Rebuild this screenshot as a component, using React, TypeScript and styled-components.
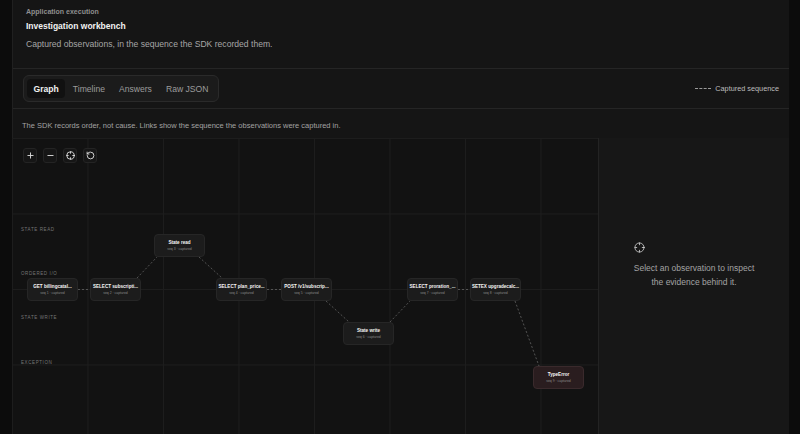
import React, { useState } from 'react';
import styled, { createGlobalStyle } from 'styled-components';
import { Plus, Minus, Crosshair, RotateCcw } from 'lucide-react';

interface GraphNode {
  id: string;
  title: string;
  x: number;
  y: number;
  error?: boolean;
}

const NODE_W = 51;
const NODE_H = 23;

const nodes: GraphNode[] = [
  { id: 'n1', title: 'GET billingcatal...', x: 15, y: 140 },
  { id: 'n2', title: 'SELECT subscripti...', x: 78, y: 140 },
  { id: 'n3', title: 'State read', x: 142, y: 96 },
  { id: 'n4', title: 'SELECT plan_price...', x: 204, y: 140 },
  { id: 'n5', title: 'POST /v1/subscrip...', x: 269, y: 140 },
  { id: 'n6', title: 'State write', x: 331, y: 184 },
  { id: 'n7', title: 'SELECT proration_...', x: 395, y: 140 },
  { id: 'n8', title: 'SETEX upgradecalc...', x: 458, y: 140 },
  { id: 'n9', title: 'TypeError', x: 521, y: 228, error: true },
];

const lanes = [
  { label: 'STATE READ', top: 89 },
  { label: 'ORDERED I/O', top: 133 },
  { label: 'STATE WRITE', top: 177 },
  { label: 'EXCEPTION', top: 222 },
];

const tabs = ['Graph', 'Timeline', 'Answers', 'Raw JSON'];

const GlobalStyle = createGlobalStyle`
  html, body {
    margin: 0;
    padding: 0;
    background: #0c0c0c;
    overflow: hidden;
  }
  body {
    font-family: "Liberation Sans", "Noto Sans", Arial, sans-serif;
    color: #e8e8e8;
  }
`;

const Shell = styled.div`
  margin-left: 12px;
  width: 777px;
  height: 100vh;
  background: #151515;
  border-left: 1px solid #202020;
  box-sizing: border-box;
  display: flex;
  flex-direction: column;
`;

const Header = styled.header`
  height: 69px;
  box-sizing: border-box;
  padding: 7px 13px 0;
  border-bottom: 1px solid #252525;
`;

const Eyebrow = styled.div`
  font-size: 7px;
  line-height: 10px;
  font-weight: 700;
  color: #8e8e8e;
`;

const Title = styled.h1`
  margin: 4px 0 0;
  font-size: 8.5px;
  line-height: 10px;
  font-weight: 700;
  color: #f2f2f2;
`;

const Subtitle = styled.p`
  margin: 7px 0 0;
  font-size: 8.6px;
  line-height: 12px;
  color: #a6a6a6;
`;

const TabsRow = styled.div`
  height: 40px;
  box-sizing: border-box;
  padding: 0 10px;
  display: flex;
  align-items: center;
  justify-content: space-between;
  border-bottom: 1px solid #252525;
`;

const TabGroup = styled.div`
  height: 27px;
  box-sizing: border-box;
  padding: 3px 3px;
  display: flex;
  gap: 1px;
  border: 1px solid #2a2a2a;
  border-radius: 6px;
  background: #1b1b1b;
`;

const Tab = styled.button<{ $active?: boolean }>`
  height: 19px;
  padding: 0 6.5px;
  border: none;
  border-radius: 4px;
  font-family: inherit;
  font-size: 8.6px;
  font-weight: ${(p) => (p.$active ? 700 : 400)};
  color: ${(p) => (p.$active ? '#f2f2f2' : '#9c9c9c')};
  background: ${(p) => (p.$active ? '#111111' : 'transparent')};
  cursor: pointer;
`;

const Legend = styled.div`
  display: flex;
  align-items: center;
  gap: 4px;
  font-size: 7.3px;
  color: #bdbdbd;
`;

const DashSample = styled.span`
  width: 16px;
  border-top: 1px dashed #9a9a9a;
`;

const Note = styled.div`
  height: 29px;
  box-sizing: border-box;
  padding: 3px 9px 0;
  display: flex;
  align-items: center;
  font-size: 7.5px;
  color: #a2a2a2;
`;

const Main = styled.div`
  flex: 1;
  display: flex;
  min-height: 0;
`;

const Canvas = styled.div`
  position: relative;
  width: 586px;
  flex-shrink: 0;
  margin-left: -1px;
  background-color: #121212;
  background-image: linear-gradient(to right, #1d1d1d 1px, transparent 1px),
    linear-gradient(to bottom, #1d1d1d 1px, transparent 1px);
  background-size: 75.5px 75.5px;
  overflow: hidden;
`;

const Controls = styled.div`
  position: absolute;
  left: 11px;
  top: 10px;
  display: flex;
  gap: 6px;
  z-index: 2;
`;

const ControlButton = styled.button`
  width: 14px;
  height: 15px;
  padding: 0;
  display: flex;
  align-items: center;
  justify-content: center;
  border: 1px solid #242424;
  border-radius: 3px;
  background: #161616;
  color: #e0e0e0;
  cursor: pointer;
`;

const LaneLabel = styled.div<{ $top: number }>`
  position: absolute;
  left: 9px;
  top: ${(p) => p.$top}px;
  font-size: 4.5px;
  line-height: 6px;
  letter-spacing: 0.6px;
  color: #767676;
`;

const Edges = styled.svg`
  position: absolute;
  inset: 0;
  width: 100%;
  height: 100%;
  pointer-events: none;
`;

const Node = styled.div<{ $error?: boolean }>`
  position: absolute;
  width: ${NODE_W}px;
  height: ${NODE_H}px;
  box-sizing: border-box;
  display: flex;
  flex-direction: column;
  align-items: center;
  justify-content: center;
  gap: 2px;
  border: 1px solid ${(p) => (p.$error ? '#3a2a2c' : '#262626')};
  border-radius: 4px;
  background: ${(p) => (p.$error ? '#2a1d1f' : '#1c1c1c')};
  cursor: pointer;
`;

const NodeTitle = styled.div`
  font-size: 4.6px;
  line-height: 5px;
  font-weight: 700;
  color: #f5f5f5;
  white-space: nowrap;
`;

const NodeMeta = styled.div`
  font-size: 3.4px;
  line-height: 4px;
  color: #8a8a8a;
  white-space: nowrap;
`;

const Inspector = styled.aside`
  flex: 1;
  background: #171717;
  border-left: 1px solid #232323;
  display: flex;
  justify-content: center;
  padding-top: 104px;
`;

const Empty = styled.div`
  display: flex;
  flex-direction: column;
  align-items: flex-start;
  color: #cfcfcf;
`;

const EmptyText = styled.p`
  margin: 8px 0 0;
  font-size: 8.5px;
  line-height: 14px;
  text-align: center;
  color: #a3a3a3;
`;

const edgePath = (a: GraphNode, b: GraphNode) => {
  if (a.y === b.y) {
    const y = a.y + NODE_H / 2;
    return `M${a.x + NODE_W} ${y} L${b.x} ${y}`;
  }
  if (b.y < a.y) {
    return `M${a.x + NODE_W - 4} ${a.y} L${b.x + 3} ${b.y + NODE_H}`;
  }
  return `M${a.x + NODE_W - 6} ${a.y + NODE_H} L${b.x + 6} ${b.y}`;
};

const App: React.FC = () => {
  const [tab, setTab] = useState('Graph');

  return (
    <>
      <GlobalStyle />
      <Shell>
        <Header>
          <Eyebrow>Application execution</Eyebrow>
          <Title>Investigation workbench</Title>
          <Subtitle>Captured observations, in the sequence the SDK recorded them.</Subtitle>
        </Header>

        <TabsRow>
          <TabGroup>
            {tabs.map((t) => (
              <Tab key={t} $active={t === tab} onClick={() => setTab(t)}>
                {t}
              </Tab>
            ))}
          </TabGroup>
          <Legend>
            <DashSample />
            Captured sequence
          </Legend>
        </TabsRow>

        <Note>The SDK records order, not cause. Links show the sequence the observations were captured in.</Note>

        <Main>
          <Canvas>
            <Controls>
              <ControlButton aria-label="Zoom in">
                <Plus size={9} strokeWidth={2.4} />
              </ControlButton>
              <ControlButton aria-label="Zoom out">
                <Minus size={9} strokeWidth={2.4} />
              </ControlButton>
              <ControlButton aria-label="Fit view">
                <Crosshair size={9} strokeWidth={2.4} />
              </ControlButton>
              <ControlButton aria-label="Reset">
                <RotateCcw size={9} strokeWidth={2.4} />
              </ControlButton>
            </Controls>

            {lanes.map((l) => (
              <LaneLabel key={l.label} $top={l.top}>
                {l.label}
              </LaneLabel>
            ))}

            <Edges>
              {nodes.slice(1).map((n, i) => (
                <path
                  key={n.id}
                  d={edgePath(nodes[i], n)}
                  stroke="#5a5a5a"
                  strokeWidth={0.9}
                  strokeDasharray="2 2"
                  fill="none"
                />
              ))}
            </Edges>

            {nodes.map((n, i) => (
              <Node key={n.id} $error={n.error} style={{ left: n.x, top: n.y }}>
                <NodeTitle>{n.title}</NodeTitle>
                <NodeMeta>seq {i + 1} · captured</NodeMeta>
              </Node>
            ))}
          </Canvas>

          <Inspector>
            <Empty>
              <Crosshair size={11} strokeWidth={1.8} />
              <EmptyText>
                Select an observation to inspect
                <br />
                the evidence behind it.
              </EmptyText>
            </Empty>
          </Inspector>
        </Main>
      </Shell>
    </>
  );
};

export default App;
